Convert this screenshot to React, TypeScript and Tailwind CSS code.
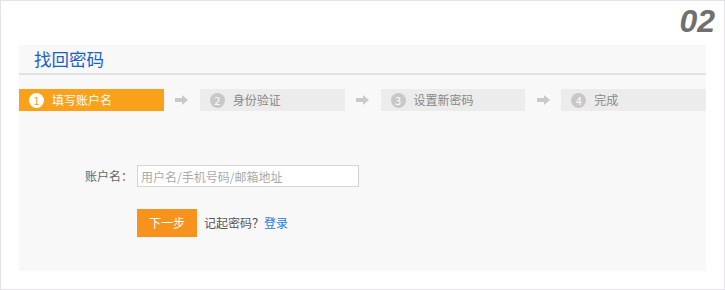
import React from 'react';

const steps = ['填写账户名', '身份验证', '设置新密码', '完成'];

const Arrow = () => (
  <div className="flex w-[36px] shrink-0 justify-center">
    <svg width="13" height="10" viewBox="0 0 13 10">
      <path d="M0 3h7V0l6 5-6 5V7H0z" fill="#c9c9c9" />
    </svg>
  </div>
);

const App = () => {
  return (
    <div
      className="flex h-[290px] w-[725px] flex-col border border-[#e4e1e8] bg-white"
      style={{ fontFamily: '"Microsoft YaHei", "Noto Sans CJK SC", sans-serif' }}
    >
      <div className="flex h-[44px] justify-end pr-[9px] pt-[4px]">
        <span className="font-['Liberation_Sans',Arial,sans-serif] text-[32px] font-bold italic leading-none text-[#707070]">
          02
        </span>
      </div>

      <div className="mx-[18px] flex h-[226px] flex-col bg-[#f8f8f8]">
        <div className="flex h-[30px] items-center border-b-2 border-[#e2e2e2] pl-[15px]">
          <h1 className="text-[17.5px] leading-none text-[#1a62c6]">找回密码</h1>
        </div>

        <div className="mt-[14px] flex items-center">
          {steps.map((s, i) => (
            <React.Fragment key={s}>
              {i > 0 && <Arrow />}
              <div
                className={
                  i === 0
                    ? 'flex h-[22px] flex-1 items-center gap-[8px] bg-[#f9a11b] pl-[10px] text-[12px] text-white'
                    : 'flex h-[22px] flex-1 items-center gap-[8px] bg-[#ececec] pl-[10px] text-[12px] text-[#888]'
                }
              >
                <span
                  className={
                    i === 0
                      ? 'flex h-[15px] w-[15px] items-center justify-center rounded-full bg-white text-[11px] leading-none text-[#f9a11b]'
                      : 'flex h-[15px] w-[15px] items-center justify-center rounded-full bg-[#c8c8c8] text-[11px] leading-none text-white'
                  }
                >
                  {i + 1}
                </span>
                <span>{s}</span>
              </div>
            </React.Fragment>
          ))}
        </div>

        <div className="mt-[54px] flex items-center">
          <label className="w-[118px] pr-[4px] text-right text-[12px] text-[#666]">账户名：</label>
          <input
            className="h-[22px] w-[222px] border border-[#d4d4d4] bg-white px-[3px] text-[12px] text-[#333] outline-none placeholder:text-[#aaa]"
            placeholder="用户名/手机号码/邮箱地址"
          />
        </div>

        <div className="mt-[22px] flex items-center pl-[118px]">
          <button className="h-[28px] w-[60px] bg-[#f7931d] text-[12px] text-white">下一步</button>
          <span className="ml-[7px] text-[12px] text-[#555]">记起密码？</span>
          <a className="text-[12px] text-[#1e7ee0]">登录</a>
        </div>
      </div>
    </div>
  );
};

export default App;
